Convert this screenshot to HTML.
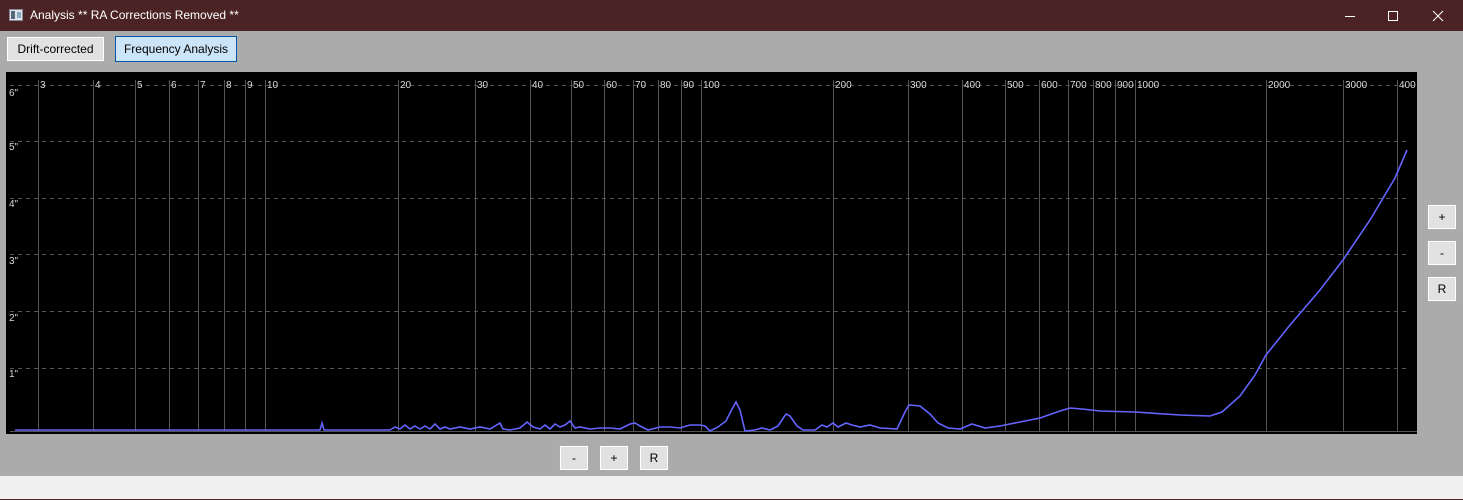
<!DOCTYPE html>
<html><head><style>
*{margin:0;padding:0;box-sizing:border-box}
body{width:1463px;height:500px;background:#ababab;font-family:"Segoe UI","Liberation Sans",sans-serif;font-size:12px;position:relative;overflow:hidden}
.title{position:absolute;left:0;top:0;width:1463px;height:31px;background:#4b2324;color:#fff;font-size:12px}
.btn{position:absolute;background:#e1e1e1;border:1px solid #adadad;box-shadow:inset 0 0 0 1px #fff;color:#000;text-align:center;font-size:12px}
.status{position:absolute;left:0;top:476px;width:1463px;height:24px;background:#f0f0f0;border-bottom:1px solid #4b2324}
</style></head><body>
<div class="title">
<svg style="position:absolute;left:9px;top:9px" width="14" height="12"><rect x="0.5" y="0.5" width="13" height="11" fill="#dfe6ee" stroke="#889"/><rect x="2" y="2" width="4" height="8" fill="#567"/><rect x="8" y="3" width="4" height="6" fill="#8ab"/></svg>
<span style="position:absolute;left:30px;top:8px">Analysis ** RA Corrections Removed **</span>
<svg style="position:absolute;left:1340px;top:0" width="123" height="31" stroke="#fff" fill="none"><line x1="5" y1="16.5" x2="15" y2="16.5"/><rect x="48.5" y="11.5" width="9" height="9"/><path d="M93 11 L103 21 M103 11 L93 21"/></svg>
</div>
<div class="btn" style="left:6px;top:36px;width:99px;height:26px;line-height:24px">Drift-corrected</div>
<div class="btn" style="left:115px;top:36px;width:122px;height:26px;line-height:24px;background:#cce4f7;border-color:#0054a6;box-shadow:none">Frequency Analysis</div>
<svg style="position:absolute;left:6px;top:72px" width="1411" height="362" viewBox="6 72 1411 362">
<rect x="6" y="72" width="1411" height="362" fill="#000"/>
<g stroke="#555" stroke-dasharray="4,4">
<line x1="10" y1="85.5" x2="1417" y2="85.5"/><line x1="10" y1="141.5" x2="1410" y2="141.5"/><line x1="10" y1="198.5" x2="1410" y2="198.5"/><line x1="10" y1="254.5" x2="1410" y2="254.5"/><line x1="10" y1="311.5" x2="1410" y2="311.5"/><line x1="10" y1="368.5" x2="1410" y2="368.5"/></g>
<g stroke="#555">
<path d="M38.5 80V431M93.5 80V431M135.5 80V431M169.5 80V431M198.5 80V431M224.5 80V431M245.5 80V431M265.5 80V431M398.5 80V431M475.5 80V431M530.5 80V431M571.5 80V431M604.5 80V431M633.5 80V431M658.5 80V431M681.5 80V431M701.5 80V431M833.5 80V431M908.5 80V431M962.5 80V431M1005.5 80V431M1039.5 80V431M1068.5 80V431M1093.5 80V431M1115.5 80V431M1135.5 80V431M1266.5 80V431M1343.5 80V431M1397.5 80V431"/>
<line x1="10" y1="431.5" x2="1417" y2="431.5"/></g>
<g fill="#d8d8d8" font-family="Liberation Sans,sans-serif" font-size="10">
<text x="40" y="88">3</text><text x="95" y="88">4</text><text x="137" y="88">5</text><text x="171" y="88">6</text><text x="200" y="88">7</text><text x="226" y="88">8</text><text x="247" y="88">9</text><text x="267" y="88">10</text><text x="400" y="88">20</text><text x="477" y="88">30</text><text x="532" y="88">40</text><text x="573" y="88">50</text><text x="606" y="88">60</text><text x="635" y="88">70</text><text x="660" y="88">80</text><text x="683" y="88">90</text><text x="703" y="88">100</text><text x="835" y="88">200</text><text x="910" y="88">300</text><text x="964" y="88">400</text><text x="1007" y="88">500</text><text x="1041" y="88">600</text><text x="1070" y="88">700</text><text x="1095" y="88">800</text><text x="1117" y="88">900</text><text x="1137" y="88">1000</text><text x="1268" y="88">2000</text><text x="1345" y="88">3000</text><text x="1399" y="88">400</text>
<text x="9" y="96">6"</text><text x="9" y="150">5"</text><text x="9" y="207">4"</text><text x="9" y="264">3"</text><text x="9" y="321">2"</text><text x="9" y="377">1"</text></g>
<polyline fill="none" stroke="#6464ff" stroke-width="1.6" points="15,430 320,430 322,423 324,430 390,430 395,427 400,429 405,425 410,429 415,426 420,429 425,426 430,429 435,424 440,429 445,427 450,429 460,427 470,429 480,427 490,429 500,423 503,429 510,430 520,428 527,422 533,427 540,429 545,425 550,429 555,424 560,427 565,425 570,421 575,428 580,427 590,429 600,428 610,428 620,429 630,424 635,423 640,426 648,430 660,427 670,427 680,428 690,425 700,425 705,426 710,431 718,427 726,421 731,411 736,402 740,410 745,431 755,430 762,428 770,430 778,426 786,414 790,416 797,426 803,430 815,430 822,425 827,427 833,423 838,427 846,423 852,425 860,427 870,425 880,428 897,429 905,412 909,405 920,406 930,414 938,423 948,428 960,429 972,424 985,428 1000,426 1020,422 1040,418 1060,411 1070,408 1082,409 1100,411 1135,412 1180,415 1210,416 1222,412 1240,396 1255,375 1266,355 1290,325 1320,290 1343,260 1370,220 1395,178 1407,150"/>
</svg>
<div class="btn" style="left:1427px;top:204px;width:30px;height:26px;line-height:24px">+</div>
<div class="btn" style="left:1427px;top:240px;width:30px;height:26px;line-height:24px">-</div>
<div class="btn" style="left:1427px;top:276px;width:30px;height:26px;line-height:24px">R</div>
<div class="btn" style="left:559px;top:445px;width:30px;height:26px;line-height:24px">-</div>
<div class="btn" style="left:599px;top:445px;width:30px;height:26px;line-height:24px">+</div>
<div class="btn" style="left:639px;top:445px;width:30px;height:26px;line-height:24px">R</div>
<div class="status"></div>
</body></html>
